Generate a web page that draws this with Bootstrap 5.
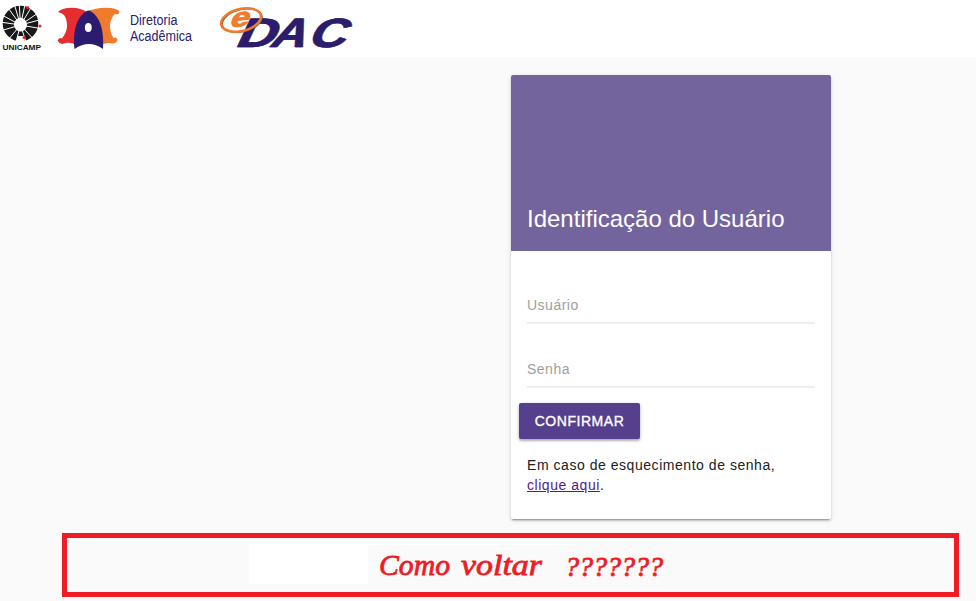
<!DOCTYPE html>
<html lang="pt-BR">
<head>
<meta charset="utf-8">
<meta name="viewport" content="width=device-width, initial-scale=1">
<title>Identificação do Usuário</title>
<link href="https://cdn.jsdelivr.net/npm/bootstrap@5.3.0/dist/css/bootstrap.min.css" rel="stylesheet">
<style>
body{background:#fafafa;font-family:"Liberation Sans",Arial,sans-serif;font-size:14px;height:601px;overflow:hidden}
.topo{height:57px}
.topo svg{display:block}
.login{width:320px;height:444px;margin:18px 0 0 511px;border:0;border-radius:2px;box-shadow:0 2px 2px 0 rgba(0,0,0,.14),0 3px 1px -2px rgba(0,0,0,.2),0 1px 5px 0 rgba(0,0,0,.12)}
.login-title{height:176px;background:#73649e;border-radius:2px 2px 0 0;padding:0 16px 16px}
.login-title h1{font-size:24px;line-height:32px;font-weight:400}
.login-form{padding:43px 16px 0}
.login-form .form-control{height:30px;padding:0 0 6px;border:0;border-bottom:2px solid #eee;border-radius:0;font-size:14px;letter-spacing:.5px;background:transparent;box-shadow:none}
.login-form .form-control::placeholder{color:#9e9e9e}
.campo{height:64px}
.confirmar{width:121px;height:36px;margin:-19px 0 0 -8px;padding:0;background:#54408c;color:#fff;border:0;border-radius:2px;font-size:14px;font-weight:400;-webkit-text-stroke:.35px #fff;letter-spacing:.55px;line-height:36px;box-shadow:0 2px 2px rgba(0,0,0,.2),0 1px 4px rgba(0,0,0,.2)}
.ajuda{margin:16px 0 0;line-height:20px;letter-spacing:.54px;color:#212121}
.ajuda a{color:#551a8b}
.aviso{width:897px;height:64px;margin:14px 0 0 62px;border:5px solid #ee1c24}
.bloco{width:119px;height:40px;background:#fff;margin:6px 0 0 182px}
</style>
</head>
<body>
<header class="topo bg-white">
<svg width="370" height="57" viewBox="0 0 370 57" role="img" aria-label="Unicamp, Diretoria Acadêmica, e-DAC">
<g>
<circle cx="20.500" cy="23.500" r="11.800" fill="none" stroke="#181818" stroke-width="12"/>
<path d="M15 42L18 36L24 36L25 42Z" fill="#fff"/>
<path d="M20.500 25L0 14M20.500 25L6 5M20.500 25L13 0M20.500 25L19 0M20.500 25L26 0M20.500 25L34 3M20.500 25L41 11M20.500 25L43 19M20.500 25L43 29M20.500 25L36 42M20.500 25L0 22M20.500 25L0 31M20.500 25L8 40M20.500 25L16 42M20.500 25L26 42" stroke="#fff" stroke-width="1"/>
<circle cx="20.500" cy="25" r="6.500" fill="#fff"/>
<circle cx="27.500" cy="7.500" r="1.500" fill="#f02020"/><circle cx="40" cy="26" r="1.500" fill="#f02020"/><circle cx="24" cy="37.500" r="1.500" fill="#f02020"/>
<text x="2.500" y="50" font-size="6.500" font-weight="700" textLength="38.500" lengthAdjust="spacingAndGlyphs" fill="#111">UNICAMP</text>
</g>
<g>
<path d="M58 12Q61 8 72 7.800Q81 8 87 12L78 46Q70 41 64 43.500Q60 45 57.800 41Q57.500 39.500 59 38.500Q61 37.500 62 38.500Q67 32 67 26Q67 19 64 15Q62 13 58 12Z" fill="#e62e31"/>
<path d="M86 12Q94 8 106 7.800Q117 8 119.500 11.500Q119 14.500 116.500 14.500L114.500 14Q110 20 110 26Q110 33 113.500 38Q116 36.500 117.500 39.500Q117 43.500 112 43.500Q106 42 99 46Z" fill="#ef7c2d"/>
<path d="M74.500 49C73 35 75 18 86 11.500Q88.500 9.500 91 11.500C102 18 104 35 103 49Q89 39 74.500 49Z" fill="#2c1c70"/>
<ellipse cx="88.300" cy="27.500" rx="3.400" ry="4.500" fill="#fff"/>
</g>
<g font-size="14" fill="#28206c">
<text x="130" y="25" textLength="47.500" lengthAdjust="spacingAndGlyphs">Diretoria</text>
<text x="130" y="41" textLength="62" lengthAdjust="spacingAndGlyphs">Acadêmica</text>
</g>
<g font-weight="700" stroke-linejoin="round">
<g transform="translate(236 46.500) skewX(-25)" font-size="41">
<g fill="#3a3238" stroke="#3a3238" stroke-width=".5" transform="translate(1.200 .5)">
<text x="-2.500" y="0" textLength="39" lengthAdjust="spacingAndGlyphs">D</text>
<text x="32" y="0" textLength="35" lengthAdjust="spacingAndGlyphs">A</text>
<text x="70" y="0" textLength="37" lengthAdjust="spacingAndGlyphs">C</text>
</g>
<g fill="#2c1c70" stroke="#2c1c70" stroke-width=".5">
<text x="-2.500" y="0" textLength="39" lengthAdjust="spacingAndGlyphs">D</text>
<text x="32" y="0" textLength="35" lengthAdjust="spacingAndGlyphs">A</text>
<text x="70" y="0" textLength="37" lengthAdjust="spacingAndGlyphs">C</text>
</g>
</g>
<g fill="none" transform="rotate(-14 241 20)">
<ellipse cx="242" cy="20.800" rx="20.300" ry="11" stroke="#74513f" stroke-width="1.400"/>
<ellipse cx="241" cy="20" rx="20.300" ry="11" stroke="#ef7c2d" stroke-width="2.500"/>
</g>
<text transform="translate(229 27.500) rotate(-6) skewX(-22)" font-size="26" textLength="19.500" lengthAdjust="spacingAndGlyphs" fill="#ef7c2d" stroke="#ef7c2d">e</text>
</g>
</svg>
</header>
<main>
<section class="card login">
<div class="login-title d-flex align-items-end text-white"><h1 class="m-0">Identificação do Usuário</h1></div>
<form class="login-form">
<div class="campo"><input class="form-control" type="text" placeholder="Usuário" aria-label="Usuário"></div>
<div class="campo"><input class="form-control" type="password" placeholder="Senha" aria-label="Senha"></div>
<button class="btn confirmar d-block" type="button">CONFIRMAR</button>
<p class="ajuda">Em caso de esquecimento de senha,<br><a href="#">clique aqui</a>.</p>
</form>
</section>
<section class="aviso d-flex align-items-start">
<div class="bloco flex-shrink-0"></div>
<svg width="310" height="54" viewBox="368 538 310 54">
<path d="M368 544.500H577" stroke="#fff"/>
<g font-family="'Monotype Corsiva','Liberation Serif',serif" font-style="italic" font-size="30" fill="#ee1c24" stroke="#ee1c24" stroke-width=".8">
<text x="379" y="574.500" textLength="71" lengthAdjust="spacingAndGlyphs">Como</text>
<text x="461" y="574.500" textLength="81" lengthAdjust="spacingAndGlyphs">voltar</text>
<text x="565" y="575.500" font-size="28" textLength="98" lengthAdjust="spacing">???????</text>
</g>
</svg>
</section>
</main>
<script src="https://cdn.jsdelivr.net/npm/bootstrap@5.3.0/dist/js/bootstrap.bundle.min.js"></script>
</body>
</html>
